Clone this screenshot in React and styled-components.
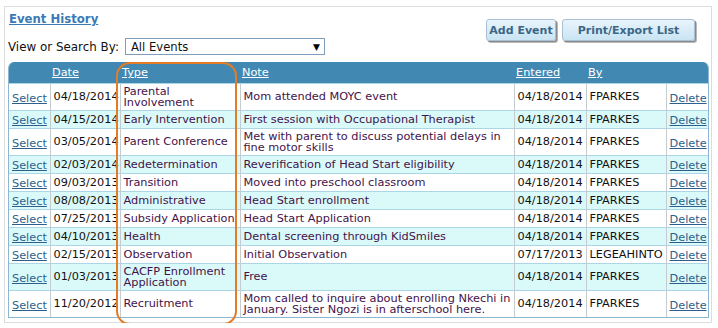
import React from "react";
import styled, { createGlobalStyle } from "styled-components";

const Global = createGlobalStyle`
  html, body { margin: 0; padding: 0; background: #fff; }
  body { font-family: "DejaVu Sans", Verdana, sans-serif; font-size: 11.3px; color: #111; }
`;

const Page = styled.div`
  padding: 6px 0 0 4px;
`;

const Panel = styled.div`
  position: relative;
  width: 700px;
  border: 1px solid #dcdcdc;
  padding: 4px 3px 4px 3px;
  box-sizing: content-box;
`;

const Top = styled.div`
  display: flex;
  justify-content: space-between;
  align-items: flex-start;
  height: 51px;
`;

const LeftCol = styled.div`
  display: flex;
  flex-direction: column;
`;

const Title = styled.a`
  font-size: 11.7px;
  font-weight: bold;
  color: #3b7ab4;
  text-decoration: underline;
  margin: 1px 0 0 1px;
  line-height: 15px;
`;

const SearchRow = styled.div`
  display: flex;
  align-items: center;
  gap: 6px;
  margin-top: 11px;
  color: #111;
`;

const Label = styled.span`
  font-size: 11.9px;
`;

const SelectBox = styled.div`
  width: 189px;
  height: 15px;
  border: 1px solid #7f9db9;
  display: flex;
  align-items: center;
  justify-content: space-between;
  padding: 0 4px 0 5px;
  box-sizing: content-box;
  font-size: 11.6px;
`;

const Arrow = styled.span`
  font-size: 9px;
  color: #000;
`;

const Buttons = styled.div`
  display: flex;
  gap: 6px;
  margin: 8px 13px 0 0;
`;

const Btn = styled.button`
  width: ${(p) => p.$w}px;
  height: 22px;
  font-family: "DejaVu Sans", Verdana, sans-serif;
  font-size: 11px;
  font-weight: bold;
  color: #3b6787;
  background: linear-gradient(#e9f4fb, #c9e4f3);
  border: 1px solid #a9bfd4;
  border-radius: 3px;
  box-shadow: 1px 1px 0 #8a8a8a, 2px 2px 0 #b8b8b8;
  padding: 0;
  cursor: pointer;
`;

const TableWrap = styled.div`
  border-radius: 6px 6px 0 0;
  overflow: hidden;
  border: 1px solid #8cb6d2;
  border-top: none;
  width: 699px;
`;

const Table = styled.table`
  border-collapse: collapse;
  table-layout: fixed;
  width: 699px;
`;

const HeadRow = styled.tr`
  background: #4189b3;
  height: 21px;
`;

const Th = styled.th`
  text-align: left;
  font-weight: normal;
  padding: 1px 2px 0;
  vertical-align: middle;
`;

const HeadLink = styled.a`
  color: #fff;
  text-decoration: underline;
`;

const Row = styled.tr`
  background: ${(p) => (p.$alt ? "#dafafa" : "#fff")};
  height: 18px;
  border-top: 1px solid #abd6e6;
`;

const Td = styled.td`
  border-left: 1px solid #c4ccd2;
  padding: ${(p) => (p.$low ? "3px 3px 0" : "2px 3px")};
  line-height: 11px;
  vertical-align: middle;
  color: ${(p) => (p.$purple ? "#43124a" : "#111")};
  white-space: ${(p) => (p.$nowrap ? "nowrap" : "normal")};
  overflow: hidden;
  &:first-child { border-left: none; }
`;

const CellLink = styled.a`
  color: #2c5f8d;
  text-decoration: underline;
`;

const Highlight = styled.div`
  position: absolute;
  left: 111px;
  top: 55px;
  width: 117px;
  height: 259px;
  border: 2px solid #e47b25;
  border-radius: 14px;
  pointer-events: none;
`;

const rows = [
  ["04/18/2014", "Parental Involvement", "Mom attended MOYC event", "04/18/2014", "FPARKES"],
  ["04/15/2014", "Early Intervention", "First session with Occupational Therapist", "04/18/2014", "FPARKES"],
  ["03/05/2014", "Parent Conference", "Met with parent to discuss potential delays in fine motor skills", "04/18/2014", "FPARKES"],
  ["02/03/2014", "Redetermination", "Reverification of Head Start eligibility", "04/18/2014", "FPARKES"],
  ["09/03/2013", "Transition", "Moved into preschool classroom", "04/18/2014", "FPARKES"],
  ["08/08/2013", "Administrative", "Head Start enrollment", "04/18/2014", "FPARKES"],
  ["07/25/2013", "Subsidy Application", "Head Start Application", "04/18/2014", "FPARKES"],
  ["04/10/2013", "Health", "Dental screening through KidSmiles", "04/18/2014", "FPARKES"],
  ["02/15/2013", "Observation", "Initial Observation", "07/17/2013", "LEGEAHINTO"],
  ["01/03/2013", "CACFP Enrollment Application", "Free", "04/18/2014", "FPARKES"],
  ["11/20/2012", "Recruitment", "Mom called to inquire about enrolling Nkechi in January. Sister Ngozi is in afterschool here.", "04/18/2014", "FPARKES"],
];

export default function App() {
  return (
    <Page>
      <Global />
      <Panel>
        <Top>
          <LeftCol>
            <Title href="#">Event History</Title>
            <SearchRow>
              <Label>View or Search By:</Label>
              <SelectBox>
                <span>All Events</span>
                <Arrow>▼</Arrow>
              </SelectBox>
            </SearchRow>
          </LeftCol>
          <Buttons>
            <Btn $w={70}>Add Event</Btn>
            <Btn $w={133}>Print/Export List</Btn>
          </Buttons>
        </Top>
        <TableWrap>
          <Table>
            <colgroup>
              <col style={{ width: 41 }} />
              <col style={{ width: 70 }} />
              <col style={{ width: 120 }} />
              <col style={{ width: 274 }} />
              <col style={{ width: 72 }} />
              <col style={{ width: 80 }} />
              <col style={{ width: 42 }} />
            </colgroup>
            <thead>
              <HeadRow>
                <Th />
                <Th><HeadLink>Date</HeadLink></Th>
                <Th><HeadLink>Type</HeadLink></Th>
                <Th><HeadLink>Note</HeadLink></Th>
                <Th><HeadLink>Entered</HeadLink></Th>
                <Th><HeadLink>By</HeadLink></Th>
                <Th />
              </HeadRow>
            </thead>
            <tbody>
              {rows.map((r, i) => (
                <Row key={i} $alt={i % 2 === 1}>
                  <Td $low><CellLink href="#">Select</CellLink></Td>
                  <Td $nowrap>{r[0]}</Td>
                  <Td $purple>{r[1]}</Td>
                  <Td $purple>{r[2]}</Td>
                  <Td $nowrap>{r[3]}</Td>
                  <Td $nowrap>{r[4]}</Td>
                  <Td $low><CellLink href="#">Delete</CellLink></Td>
                </Row>
              ))}
            </tbody>
          </Table>
        </TableWrap>
        <Highlight />
      </Panel>
    </Page>
  );
}
